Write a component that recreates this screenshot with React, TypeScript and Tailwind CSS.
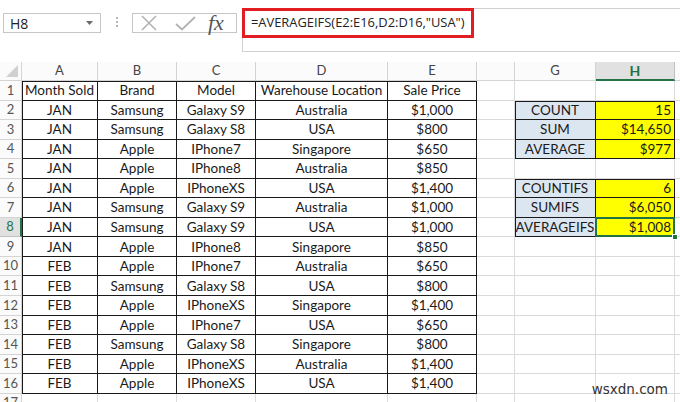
import React from "react";

const cols = ["A", "B", "C", "D", "E", "", "G", "H", ""];

const data: string[][] = [
  ["Month Sold", "Brand", "Model", "Warehouse Location", "Sale Price"],
  ["JAN", "Samsung", "Galaxy S9", "Australia", "$1,000"],
  ["JAN", "Samsung", "Galaxy S8", "USA", "$800"],
  ["JAN", "Apple", "IPhone7", "Singapore", "$650"],
  ["JAN", "Apple", "IPhone8", "Australia", "$850"],
  ["JAN", "Apple", "IPhoneXS", "USA", "$1,400"],
  ["JAN", "Samsung", "Galaxy S9", "Australia", "$1,000"],
  ["JAN", "Samsung", "Galaxy S9", "USA", "$1,000"],
  ["JAN", "Apple", "IPhone8", "Singapore", "$850"],
  ["FEB", "Apple", "IPhone7", "Australia", "$650"],
  ["FEB", "Samsung", "Galaxy S8", "USA", "$800"],
  ["FEB", "Apple", "IPhoneXS", "Singapore", "$1,400"],
  ["FEB", "Apple", "IPhone7", "USA", "$650"],
  ["FEB", "Samsung", "Galaxy S8", "Singapore", "$800"],
  ["FEB", "Apple", "IPhoneXS", "Australia", "$1,400"],
  ["FEB", "Apple", "IPhoneXS", "USA", "$1,400"],
];

const summary: Record<number, [string, string]> = {
  2: ["COUNT", "15"],
  3: ["SUM", "$14,650"],
  4: ["AVERAGE", "$977"],
  6: ["COUNTIFS", "6"],
  7: ["SUMIFS", "$6,050"],
  8: ["AVERAGEIFS", "$1,008"],
};

function Toolbar() {
  return (
    <div className="flex h-[52px] items-start">
      <div className="ml-[3px] mt-[13px] flex h-[20px] w-[98px] items-center justify-between border border-[#c6c6c6] pl-[6px] pr-[7px] text-[14px] text-[#222]">
        <span>H8</span>
        <svg width="7" height="4" viewBox="0 0 7 4">
          <path d="M0 0 L7 0 L3.5 4 Z" fill="#6b6b6b" />
        </svg>
      </div>
      <div className="flex w-[31px] flex-col items-center gap-[2px] pt-[17px]">
        <span className="h-[2px] w-[2px] bg-[#b5b5b5]" />
        <span className="h-[2px] w-[2px] bg-[#b5b5b5]" />
        <span className="h-[2px] w-[2px] bg-[#b5b5b5]" />
      </div>
      <div className="mt-[13px] flex h-[20px] w-[105px] items-center border border-[#c6c6c6]">
        <svg className="ml-[7px]" width="18" height="16" viewBox="0 0 18 16">
          <path d="M2 1 L16 15 M16 1 L2 15" stroke="#b3b3b3" strokeWidth="1.6" fill="none" />
        </svg>
        <svg className="ml-[17px]" width="21" height="15" viewBox="0 0 21 15">
          <path d="M1 8 L7 13.5 L20 1" stroke="#b3b3b3" strokeWidth="1.8" fill="none" />
        </svg>
        <span className="ml-[12px] font-['Liberation_Serif',serif] text-[22px] italic leading-none text-[#555]">
          fx
        </span>
      </div>
      <div className="relative ml-[5px] mt-[8px] h-[44px] flex-1 border-l border-t border-b border-[#d0d0d0]">
        <div className="absolute -left-[1px] -top-[1px] flex h-[30px] w-[232px] items-center border-[3px] border-[#e21c23] pl-[6px] text-[12.9px] text-[#222]">
          =AVERAGEIFS(E2:E16,D2:D16,"USA")
        </div>
      </div>
    </div>
  );
}

export default function App() {
  const widths = [22, 76, 79, 79, 132, 89, 38, 81, 79, 20];
  const rowH = "h-[19.56px]";
  return (
    <div className="relative h-[402px] w-[680px] overflow-hidden bg-white font-['Open_Sans',sans-serif]">
      <Toolbar />
      <div className="h-[10px]" />
      {/* Column headers */}
      <div className="flex h-[19px] font-['Lato',sans-serif]">
        <div
          className="relative shrink-0 border-r border-b border-[#d4d4d4] bg-[#fbfbfb]"
          style={{ width: widths[0] }}
        >
          <svg className="absolute bottom-[3px] right-[3px]" width="12" height="12" viewBox="0 0 12 12">
            <path d="M12 0 L12 12 L0 12 Z" fill="#d0d0d0" />
          </svg>
        </div>
        {cols.map((c, i) =>
          c === "H" ? (
            <div
              key={i}
              className="flex shrink-0 items-center justify-center border-r border-[#c0c0c0] border-b-2 border-b-[#217346] bg-[#e1e1e1] text-[14px] font-bold text-[#217346]"
              style={{ width: widths[i + 1] }}
            >
              {c}
            </div>
          ) : (
            <div
              key={i}
              className="flex shrink-0 items-center justify-center border-r border-b border-[#d4d4d4] bg-[#fbfbfb] text-[13px] text-[#444]"
              style={{ width: widths[i + 1] }}
            >
              {c}
            </div>
          )
        )}
      </div>
      {/* Rows */}
      <div className="font-['Lato',sans-serif] text-[13.5px] text-[#1a1a1a]">
        {Array.from({ length: 17 }, (_, r) => {
          const rowNum = r + 1;
          const row = data[r];
          const sum = summary[rowNum];
          const selRow = rowNum === 8;
          return (
            <div key={rowNum} className={`flex ${rowH}`}>
              <div
                className={
                  selRow
                    ? "flex shrink-0 items-center justify-center border-b border-[#c0c0c0] border-r-2 border-r-[#217346] bg-[#e1e1e1] text-[13px] text-[#217346]"
                    : "flex shrink-0 items-center justify-center border-r border-b border-[#d4d4d4] bg-[#fbfbfb] text-[13px] text-[#555]"
                }
                style={{ width: widths[0] }}
              >
                {rowNum}
              </div>
              {[0, 1, 2, 3, 4].map((ci) => {
                const inTable = rowNum <= 16;
                const cls = inTable
                  ? `border-r border-b border-[#1a1a1a] ${ci === 0 && rowNum === 1 ? "shadow-[inset_1px_1px_0_#1a1a1a]" : ci === 0 ? "shadow-[inset_1px_0_0_#1a1a1a]" : rowNum === 1 ? "shadow-[inset_0_1px_0_#1a1a1a]" : ""}`
                  : "border-r border-b border-[#dadada]";
                return (
                  <div
                    key={ci}
                    className={`flex shrink-0 items-center justify-center overflow-hidden whitespace-nowrap ${cls}`}
                    style={{ width: widths[ci + 1] }}
                  >
                    {row ? row[ci] : ""}
                  </div>
                );
              })}
              {/* F */}
              <div className="shrink-0 border-r border-b border-[#dadada]" style={{ width: widths[6] }} />
              {/* G */}
              {sum ? (
                <div
                  className={`flex shrink-0 items-center justify-center whitespace-nowrap border-r border-b border-[#1a1a1a] bg-[#dce6f1] ${rowNum === 2 || rowNum === 6 ? "shadow-[inset_1px_1px_0_#1a1a1a]" : "shadow-[inset_1px_0_0_#1a1a1a]"}`}
                  style={{ width: widths[7] }}
                >
                  {sum[0]}
                </div>
              ) : (
                <div className="shrink-0 border-r border-b border-[#dadada]" style={{ width: widths[7] }} />
              )}
              {/* H */}
              {sum ? (
                <div
                  className={`relative flex shrink-0 items-center justify-end whitespace-nowrap border-r border-b border-[#1a1a1a] bg-[#ffff00] pr-[3px] ${rowNum === 2 || rowNum === 6 ? "shadow-[inset_0_1px_0_#1a1a1a]" : ""}`}
                  style={{ width: widths[8] }}
                >
                  {sum[1]}
                  {selRow && (
                    <>
                      <div className="pointer-events-none absolute -left-[1px] -top-[1px] -right-[1px] -bottom-[1px] border-2 border-[#217346]" />
                      <div className="absolute -bottom-[4px] -right-[4px] h-[6px] w-[6px] border border-white bg-[#217346]" />
                    </>
                  )}
                </div>
              ) : (
                <div className="shrink-0 border-r border-b border-[#dadada]" style={{ width: widths[8] }} />
              )}
              {/* I */}
              <div className="shrink-0 border-r border-b border-[#dadada]" style={{ width: widths[9] }} />
            </div>
          );
        })}
      </div>
      <div className="absolute bottom-[6px] right-[12px] font-['DejaVu_Sans',sans-serif] text-[13.5px] leading-none text-[#333]">
        wsxdn.com
      </div>
    </div>
  );
}
